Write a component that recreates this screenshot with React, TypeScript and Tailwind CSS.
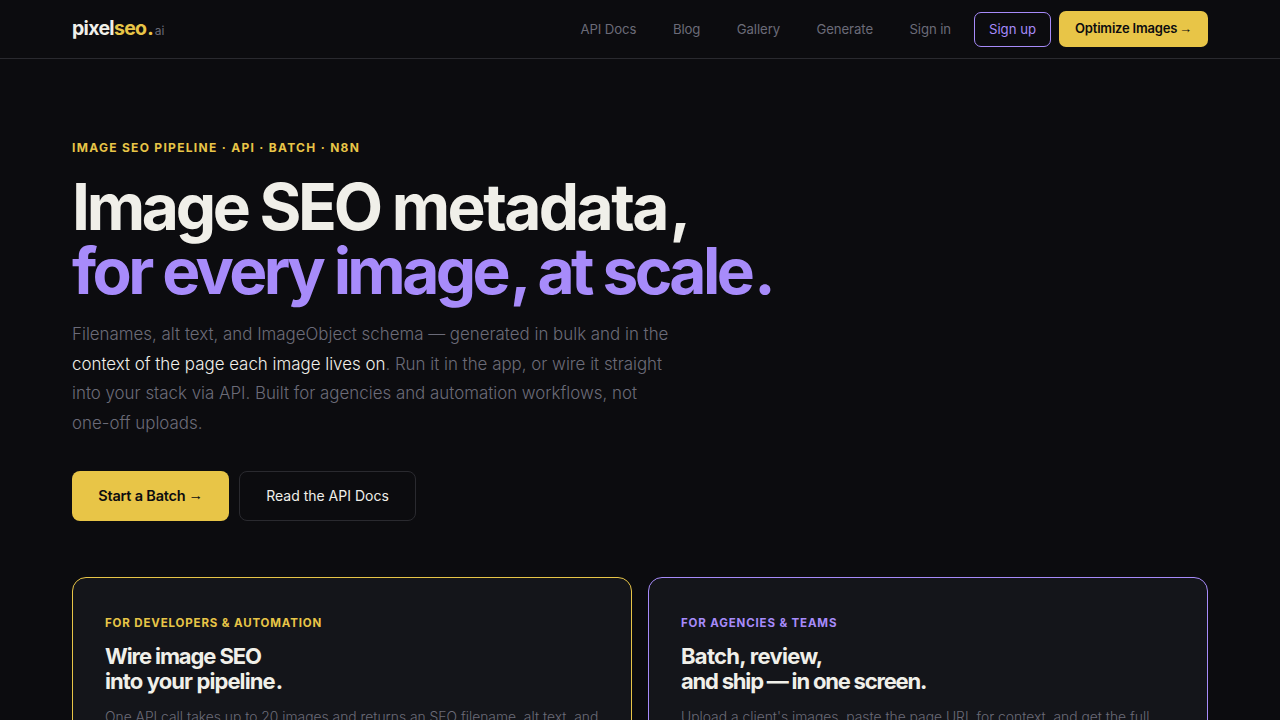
import React from 'react';

const navLinks = ['API Docs', 'Blog', 'Gallery', 'Generate'];

const Arrow: React.FC = () => <span className="font-['Liberation_Sans',sans-serif] font-normal">→</span>;

const App: React.FC = () => {
    return (
        <div className="h-screen overflow-hidden bg-[#0c0c0f] font-['Inter',sans-serif] text-white">
            {/* Header */}
            <header className="h-[59px] border-b border-[#2a2a2f] px-[72px] flex items-center justify-between">
                <div className="flex items-baseline font-bold text-[19.5px] tracking-[-0.7px]">
                    <span className="text-[#f0efe9]">pixel</span>
                    <span className="text-[#e8c547]">seo<span className="ml-[1px]">.</span></span>
                    <span className="ml-[1.5px] text-[12px] font-normal tracking-normal text-[#6b6b78]">ai</span>
                </div>
                <nav className="flex items-center">
                    {navLinks.map(link => (
                        <a key={link} className="mr-[36.5px] pt-[1px] text-[13.2px] tracking-[-0.1px] text-[#6b6b78]">{link}</a>
                    ))}
                    <a className="mr-[23px] pt-[1px] text-[13.2px] tracking-[-0.1px] text-[#6b6b78]">Sign in</a>
                    <a className="h-[35px] w-[77px] flex items-center justify-center rounded-[7px] border border-[#a78bfa] pt-[1px] text-[13.2px] text-[#a78bfa] mr-[8px]">Sign up</a>
                    <a className="h-[36px] w-[149px] flex items-center justify-center gap-[2px] rounded-[7px] bg-[#e8c547] text-[13px] font-semibold tracking-[-0.2px] text-[#0c0c0f]">Optimize Images <Arrow /></a>
                </nav>
            </header>

            <main className="px-[72px]">
                {/* Hero */}
                <section className="pt-[81px]">
                    <p className="text-[12px] leading-[16px] font-bold tracking-[1.3px] text-[#e8c547]">IMAGE SEO PIPELINE · API · BATCH · N8N</p>
                    <h1 className="mt-[19px] text-[64px] leading-[64px] font-bold tracking-[-3px] text-[#f0efe9]">
                        <span className="tracking-[-3.3px]">Image SEO</span> <span className="tracking-[-2.6px]">metadata</span><span className="ml-[3px]">,</span>
                        <br />
                        <span className="tracking-[-3.6px] text-[#a78bfa]">for every image<span className="ml-[3px]">,</span> at scale<span className="ml-[3px]">.</span></span>
                    </h1>
                    <p className="mt-[17px] w-[600px] text-[16.9px] leading-[29.5px] font-light text-[#6b6b78]">
                        Filenames, alt text, and ImageObject schema — generated in bulk and in the <span className="text-[#f0efe9]">context of the page each image lives on</span>. Run it in the app, or wire it straight into your stack via API. Built for agencies and automation workflows, not one-off uploads.
                    </p>
                    <div className="mt-[33px] flex gap-[10px]">
                        <a className="h-[50px] w-[157px] flex items-center justify-center gap-[3px] rounded-[8px] bg-[#e8c547] text-[14.5px] font-semibold tracking-[-0.2px] text-[#0c0c0f]">Start a Batch <Arrow /></a>
                        <a className="h-[50px] w-[177px] flex items-center justify-center rounded-[8px] border border-[#2a2a2f] pb-[1px] text-[14px] text-[#f0efe9]">Read the API Docs</a>
                    </div>
                </section>

                {/* Audience cards */}
                <section className="mt-[56px] grid grid-cols-2 gap-[16px]">
                    <div className="rounded-[14px] border border-[#e8c547] bg-[#14151a] p-[32px] pt-[37px]">
                        <p className="text-[11.5px] leading-[16px] font-bold tracking-[0.85px] text-[#e8c547]">FOR DEVELOPERS & AUTOMATION</p>
                        <h2 className="mt-[13px] text-[22px] leading-[25px] font-bold tracking-[-1.1px] text-[#f0efe9]">Wire image SEO<br /><span className="tracking-[-0.9px]">into your pipeline<span className="ml-[1px]">.</span></span></h2>
                        <p className="mt-[12px] text-[13.85px] leading-[23px] font-light text-[#6b6b78]">One API call takes up to 20 images and returns an SEO filename, alt text, and ImageObject schema for each.</p>
                    </div>
                    <div className="rounded-[14px] border border-[#a78bfa] bg-[#14151a] p-[32px] pt-[37px]">
                        <p className="text-[11.5px] leading-[16px] font-bold tracking-[0.85px] text-[#a78bfa]">FOR AGENCIES & TEAMS</p>
                        <h2 className="mt-[13px] text-[22px] leading-[25px] font-bold tracking-[-1.2px] text-[#f0efe9]"><span className="tracking-[-0.7px]">Batch, review,</span><br />and ship — in one screen.</h2>
                        <p className="mt-[12px] text-[13.85px] leading-[23px] font-light text-[#6b6b78]">Upload a client's images, paste the page URL for context, and get the full metadata set back in one review screen.</p>
                    </div>
                </section>
            </main>
        </div>
    );
};

export default App;
